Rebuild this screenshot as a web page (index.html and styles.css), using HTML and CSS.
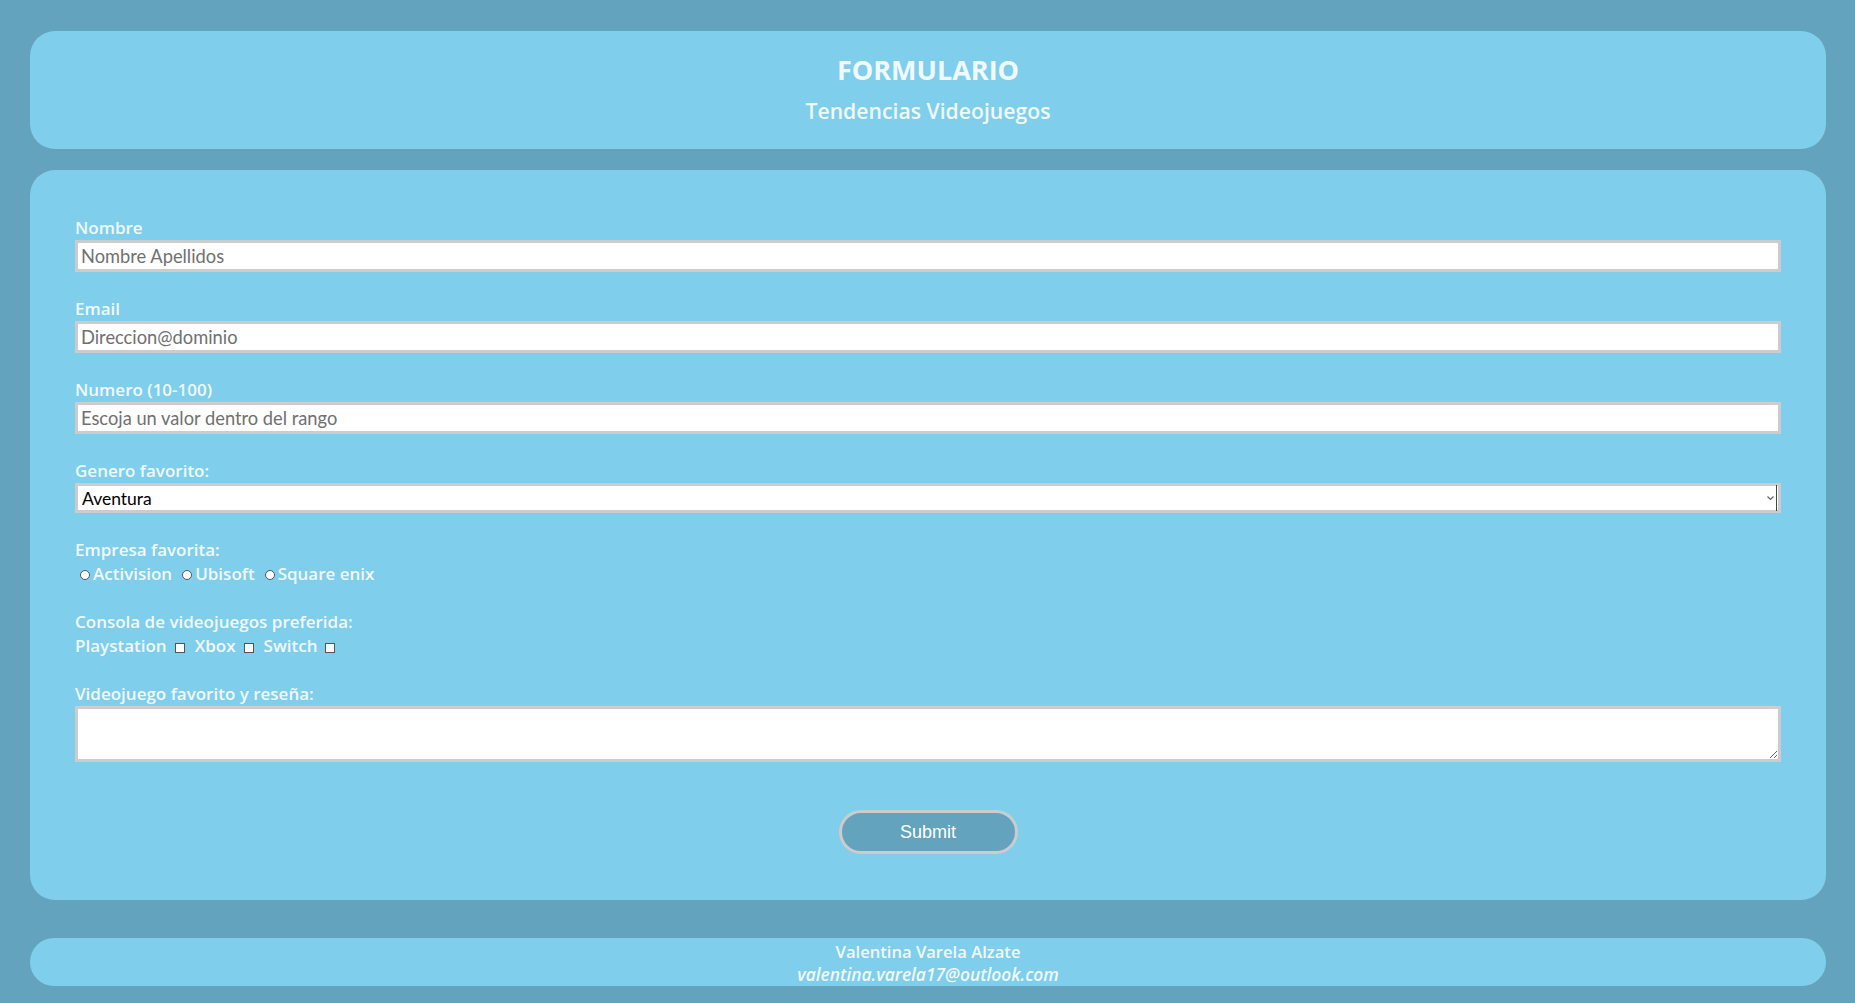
FILE: index.html
```html
<!DOCTYPE html>
<html lang="es">
<head>
<meta charset="utf-8">
<title>Formulario</title>
<link rel="stylesheet" href="styles.css">
</head>
<body>
<header class="card header">
  <h1 class="title">FORMULARIO</h1>
  <h2 class="subtitle">Tendencias Videojuegos</h2>
</header>
<main class="card form-card">
  <form class="form">
    <div class="field">
      <label class="label" for="nombre">Nombre</label>
      <input class="input" id="nombre" type="text" placeholder="Nombre Apellidos">
    </div>
    <div class="field">
      <label class="label" for="email">Email</label>
      <input class="input" id="email" type="email" placeholder="Direccion@dominio">
    </div>
    <div class="field">
      <label class="label" for="numero">Numero (10-100)</label>
      <input class="input" id="numero" type="text" placeholder="Escoja un valor dentro del rango">
    </div>
    <div class="field">
      <label class="label" for="genero">Genero favorito:</label>
      <div class="select-wrap">
        <select class="select" id="genero">
          <option>Aventura</option>
        </select>
        <svg class="select-arrow" width="12" height="26" viewBox="0 0 12 26" aria-hidden="true">
          <path d="M1.5 11.5 L4.5 14.5 L7.5 11.5" fill="none" stroke="#666" stroke-width="1.2"/>
          <rect x="10" y="0" width="1" height="26" fill="#444"/>
        </svg>
      </div>
    </div>
    <div class="field field-options">
      <span class="label">Empresa favorita:</span>
      <div class="options radios">
        <label class="opt"><input class="radio" type="radio" name="empresa">Activision</label>
        <label class="opt"><input class="radio" type="radio" name="empresa">Ubisoft</label>
        <label class="opt"><input class="radio" type="radio" name="empresa">Square enix</label>
      </div>
    </div>
    <div class="field field-options">
      <span class="label">Consola de videojuegos preferida:</span>
      <div class="options checks">
        <label class="opt">Playstation<input class="check" type="checkbox"></label>
        <label class="opt">Xbox<input class="check" type="checkbox"></label>
        <label class="opt">Switch<input class="check" type="checkbox"></label>
      </div>
    </div>
    <div class="field field-area">
      <label class="label" for="resena">Videojuego favorito y reseña:</label>
      <textarea class="textarea" id="resena"></textarea>
    </div>
    <div class="actions">
      <button class="submit" type="submit">Submit</button>
    </div>
  </form>
</main>
<footer class="card footer">
  <p class="author">Valentina Varela Alzate</p>
  <p class="mail">valentina.varela17@outlook.com</p>
</footer>
</body>
</html>
```
FILE: styles.css
```css
* { box-sizing: border-box; }

body {
  margin: 0;
  padding: 31px 29px 17px 30px;
  background: #64a3be;
  font-family: "Open Sans", Lato, sans-serif;
  color: #f0f9fe;
}

.card {
  background: #7fceec;
  border-radius: 25px;
}

.header {
  display: flex;
  flex-direction: column;
  align-items: center;
  padding: 22px 0 23px;
}

.title {
  margin: 0;
  font-size: 27px;
  line-height: 34px;
  font-weight: 700;
}

.subtitle {
  margin: 9px 0 0;
  font-size: 21.2px;
  line-height: 30px;
  font-weight: 600;
}

.form-card {
  margin-top: 21px;
  padding: 46px 45px 46px 45px;
}

.form {
  display: flex;
  flex-direction: column;
}

.field {
  display: flex;
  flex-direction: column;
  margin-bottom: 25px;
}

.field-options { margin-bottom: 24px; }

.label {
  display: block;
  font-size: 17px;
  line-height: 24px;
  font-weight: 600;
}

.input {
  height: 32px;
  border: 3px solid #cccccc;
  padding: 0 3px;
  font-family: Lato, sans-serif;
  font-size: 18.3px;
  color: #000;
  background: #fff;
  outline: none;
}

.input::placeholder { color: #707070; }

.select-wrap {
  position: relative;
}

.select {
  width: 100%;
  height: 30px;
  border: 3px solid #cccccc;
  padding: 0 4px;
  font-family: Lato, sans-serif;
  font-size: 17.5px;
  color: #000;
  background: #fff;
  appearance: none;
  outline: none;
}

.select-arrow {
  position: absolute;
  right: 3px;
  top: 2px;
}

.options {
  display: flex;
  align-items: center;
  font-size: 17px;
  line-height: 24px;
  font-weight: 600;
}

.radios { gap: 10px; padding-left: 5px; }
.checks { gap: 10px; }

.opt {
  display: flex;
  align-items: center;
}

.radio {
  appearance: none;
  width: 10px;
  height: 10px;
  margin: 2px 3px 0 0;
  border: 1px solid #555;
  border-radius: 50%;
  background: #fff;
}

.check {
  appearance: none;
  width: 10px;
  height: 10px;
  margin: 4px 0 0 8px;
  border: 1px solid #555;
  background: #fff;
}

.textarea {
  height: 56px;
  border: 3px solid #cccccc;
  background: #fff;
  font-family: inherit;
  resize: vertical;
}

.field-area { margin-bottom: 48px; }

.actions {
  display: flex;
  justify-content: center;
}

.submit {
  width: 179px;
  height: 44px;
  border: 3px solid #cccccc;
  border-radius: 22px;
  background: #64a3be;
  color: #fff;
  font-family: "Liberation Sans", Arial, sans-serif;
  font-size: 18px;
}

.footer {
  margin-top: 38px;
  padding: 2px 0 0;
  text-align: center;
  border-radius: 24px;
}

.author {
  margin: 0;
  font-size: 16.6px;
  line-height: 23px;
  font-weight: 600;
}

.mail {
  margin: 0;
  font-size: 17.4px;
  line-height: 23px;
  font-weight: 600;
  font-style: italic;
}
```
